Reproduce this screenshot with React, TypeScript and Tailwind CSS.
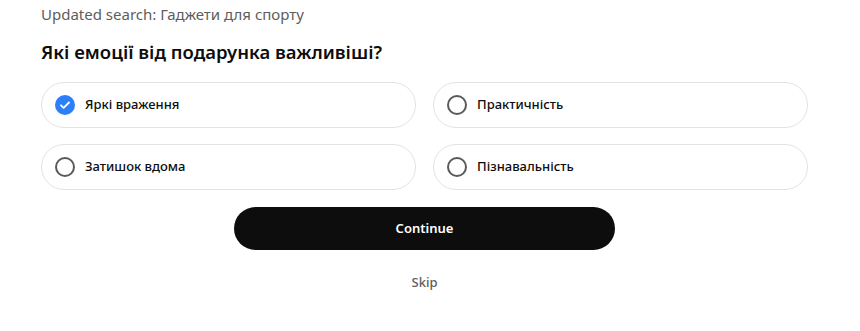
import { useState } from "react";

const options = ["Яркі враження", "Практичність", "Затишок вдома", "Пізнавальність"];

function Radio({ checked }: { checked: boolean }) {
  if (checked) {
    return (
      <svg width="20" height="20" viewBox="0 0 20 20" className="shrink-0">
        <circle cx="10" cy="10" r="10" fill="#2d7ff9" />
        <path d="M6 10.3l2.6 2.6L14 7.5" fill="none" stroke="#fff" strokeWidth="1.8" strokeLinecap="round" strokeLinejoin="round" />
      </svg>
    );
  }
  return (
    <svg width="20" height="20" viewBox="0 0 20 20" className="shrink-0">
      <circle cx="10" cy="10" r="9" fill="none" stroke="#5a5a5a" strokeWidth="2" />
    </svg>
  );
}

export default function App() {
  const [selected, setSelected] = useState<string[]>(["Яркі враження"]);

  const toggle = (o: string) =>
    setSelected((s) => (s.includes(o) ? s.filter((x) => x !== o) : [...s, o]));

  return (
    <main
      className="min-h-screen bg-white px-[41px] pt-[4px] text-[#0d0d0d]"
      style={{ fontFamily: '"Noto Sans", sans-serif' }}
    >
      <p className="text-[15px] leading-[20px] text-[#5d5d5d]">Updated search: Гаджети для спорту</p>
      <h1 className="mt-[16px] text-[18.5px] font-semibold leading-[24px]">Які емоції від подарунка важливіші?</h1>

      <div className="mt-[18px] grid w-[767px] grid-cols-2 gap-x-[17px] gap-y-[16px]">
        {options.map((o) => (
          <button
            key={o}
            onClick={() => toggle(o)}
            className="flex h-[46px] items-center gap-[10px] rounded-full border border-[#e3e3e3] pl-[13px] text-left text-[13px] font-medium"
          >
            <Radio checked={selected.includes(o)} />
            <span>{o}</span>
          </button>
        ))}
      </div>

      <div className="mt-[17px] flex w-[767px] flex-col items-center">
        <button className="h-[43px] w-[381px] rounded-full bg-[#0d0d0d] text-[13px] font-semibold text-white">
          Continue
        </button>
        <button className="mt-[23px] text-[13px] font-medium text-[#5d5d5d]">Skip</button>
      </div>
    </main>
  );
}
